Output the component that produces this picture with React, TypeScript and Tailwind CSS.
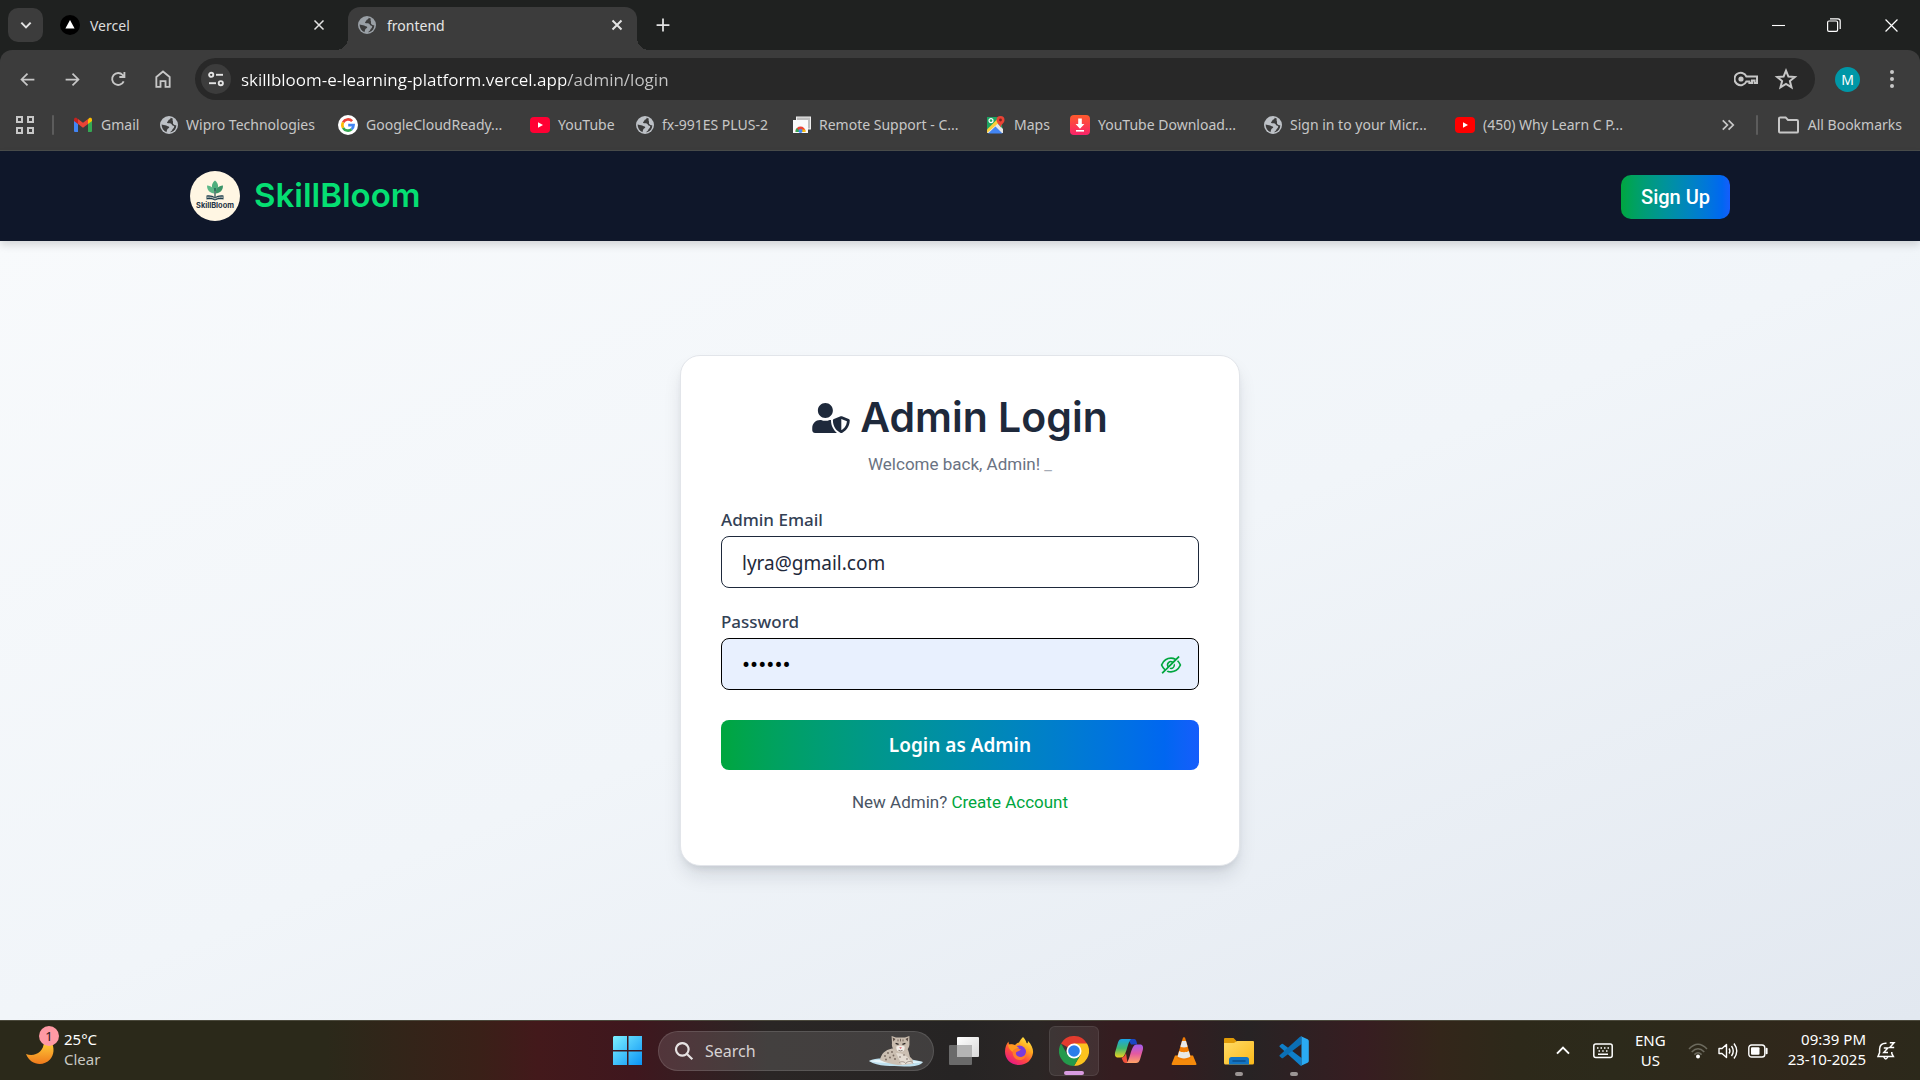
import { useState } from "react";
import type { ReactNode } from "react";
import { FaUserShield } from "react-icons/fa";
import { AiOutlineEye, AiOutlineEyeInvisible } from "react-icons/ai";

/* ---------- small icons ---------- */

function Globe({ fill, bg }: { fill: string; bg: string }) {
  return (
    <svg viewBox="0 0 18 18" className="size-[18px] shrink-0" aria-hidden="true">
      <circle cx="9" cy="9" r="9" fill={fill} />
      <path
        d="M1.6 8.6 C3 9.2 4.8 8.9 6.2 9.6 C7.4 10.3 8.4 10.4 9.2 11 C9.6 12 7.6 12.4 7.2 13.4 C7 14.4 6.4 15.4 6.6 16.2 C3.4 15 1.6 12 1.6 8.6 Z"
        fill={bg}
      />
      <path
        d="M10.6 1.8 C10.8 3 9.8 3.4 8.8 3.8 C8 4.2 8.6 5.4 7.4 5.8 C6.6 6.2 7 7.2 8 7.2 C9.6 7.2 11.4 7 11.8 8.6 C12 9.8 13.4 9.4 14.2 10.2 C14.6 11.4 13 12.4 12.4 13.6 C12 14.6 11.2 15.6 10 16.2 L11.6 16 C14.6 15 16.3 12.4 16.3 9.2 C15.4 9.4 14 9 13.2 8 C12.6 7 13.4 6 12.8 5 C12.2 4 12.8 3 13 2.8 Z"
        fill={bg}
      />
    </svg>
  );
}

function Line({ d, className, width = 2 }: { d: string; className: string; width?: number }) {
  return (
    <svg viewBox="0 0 24 24" className={className} fill="none" stroke="currentColor" strokeWidth={width} aria-hidden="true">
      <path d={d} />
    </svg>
  );
}

const GmailIcon = () => (
  <svg viewBox="0 0 20 16" className="h-4 w-5 shrink-0" aria-hidden="true">
    <path d="M1 3 V14 Q1 15 2 15 H5 V6.5 Z" fill="#4285f4" />
    <path d="M19 3 V14 Q19 15 18 15 H15 V6.5 Z" fill="#34a853" />
    <path d="M15 2.2 V7 L19 4 V2.4 C19 .8 17.2 .2 16 1.2 Z" fill="#fbbc04" />
    <path d="M5 2.2 V7 L1 4 V2.4 C1 .8 2.8 .2 4 1.2 Z" fill="#c5221f" />
    <path d="M5 2 L10 5.8 L15 2 V7 L10 10.8 L5 7 Z" fill="#ea4335" />
  </svg>
);

const GoogleIcon = () => (
  <svg viewBox="0 0 20 20" className="size-5 shrink-0" aria-hidden="true">
    <circle cx="10" cy="10" r="10" fill="#fff" />
    <g fill="none" strokeWidth="2.6">
      <path d="M14.1 6.2 A5.6 5.6 0 0 0 5.1 7.3" stroke="#ea4335" />
      <path d="M5.1 7.3 A5.6 5.6 0 0 0 5.1 12.8" stroke="#fbbc05" />
      <path d="M5.1 12.8 A5.6 5.6 0 0 0 13.6 14.3" stroke="#34a853" />
      <path d="M13.6 14.3 A5.6 5.6 0 0 0 15.6 10.1 H10.2" stroke="#4285f4" />
    </g>
  </svg>
);

const YouTubeIcon = ({ fill }: { fill: string }) => (
  <svg viewBox="0 0 20 16" className="h-4 w-5 shrink-0" aria-hidden="true">
    <rect width="20" height="16" rx="4" fill={fill} />
    <path d="M8 5.2 L13 8 L8 10.8 Z" fill="#fff" />
  </svg>
);

const RemoteIcon = () => (
  <svg viewBox="0 0 18 18" className="size-[18px] shrink-0" aria-hidden="true">
    <rect x="3.5" y="1" width="14" height="12" fill="#bdbdbd" stroke="#eee" />
    <rect x="0" y="4" width="15" height="13" fill="#fafafa" />
    <path d="M2.5 15.5 A5 5 0 0 1 12.5 15.5 H9.5 A2 2 0 0 0 5.5 15.5 Z" fill="#ea4335" />
    <path d="M2.5 16 A5 5 0 0 1 4 12 L6 14.5 V16 Z" fill="#34a853" />
    <path d="M9 16 V13.5 H12 A5 5 0 0 1 12.5 16 Z" fill="#fbbc05" />
    <circle cx="7.5" cy="15" r="2" fill="#4285f4" />
  </svg>
);

const MapsIcon = () => (
  <svg viewBox="0 0 20 20" className="size-5 shrink-0" aria-hidden="true">
    <path d="M1 2 H15 L17 18 H1 Z" fill="#1ea362" />
    <path d="M1 17 L11 8 L17 14 V18 H1 Z" fill="#e6e6e6" />
    <path d="M2 18.5 L9.5 11.5 L16.5 18.5 Z" fill="#4285f4" />
    <path d="M1 14.5 L11.5 4 L13 7.5 L1 18 Z" fill="#fbcf3a" />
    <circle cx="5" cy="5.6" r="2" fill="none" stroke="#fff" strokeWidth="1.2" />
    <path d="M14.5 1 A4 4 0 0 1 18.5 5 C18.5 8 15.6 8.6 14.5 12.5 C13.4 8.6 10.5 8 10.5 5 A4 4 0 0 1 14.5 1 Z" fill="#ea4335" />
    <circle cx="14.5" cy="5" r="1.4" fill="#7b231e" />
  </svg>
);

const DownloaderIcon = () => (
  <svg viewBox="0 0 20 20" className="size-5 shrink-0" aria-hidden="true">
    <defs>
      <linearGradient id="dl" x1="0" y1="0" x2="0" y2="1">
        <stop offset="0" stopColor="#ff5a2c" />
        <stop offset="1" stopColor="#f9236a" />
      </linearGradient>
    </defs>
    <rect width="20" height="20" rx="4" fill="url(#dl)" />
    <path d="M8.2 3.6 H11.8 V9 H14.4 L10 13.8 L5.6 9 H8.2 Z" fill="#fff" />
    <rect x="6" y="15" width="8" height="1.6" fill="#fff" />
  </svg>
);

/* ---------- browser chrome ---------- */

function TabStrip() {
  return (
    <div className="flex h-[50px] items-center bg-[#1f2120] text-[#e3e3e3]">
      <button aria-label="Search tabs" className="ml-2 flex h-[34px] w-[35px] items-center justify-center rounded-[10px] bg-[#3c3c3c]">
        <Line d="M5 8.5 L12 15.5 L19 8.5" className="size-4" width={3} />
      </button>
      <div className="flex h-full w-[290px] items-center pl-[17px]">
        <svg viewBox="0 0 20 20" className="size-5" aria-hidden="true">
          <circle cx="10" cy="10" r="10" fill="#000" />
          <path d="M10 5 L14.6 13.4 H5.4 Z" fill="#fff" />
        </svg>
        <span className="ml-[10px] flex-1 text-[14px] text-[#dcdcdc]">Vercel</span>
        <button aria-label="Close Vercel tab" className="p-2">
          <Line d="M3 3 L21 21 M21 3 L3 21" className="size-3" width={3} />
        </button>
      </div>
      <div className="relative ml-[15px] flex h-[43px] w-[289px] items-center self-end rounded-t-xl bg-[#3c3c3c] pr-[6px] pb-[7px] pl-[10px]">
        <span className="absolute bottom-0 -left-3 size-3 bg-[radial-gradient(circle_at_0_0,transparent_12px,#3c3c3c_12px)]" />
        <span className="absolute -right-3 bottom-0 size-3 bg-[radial-gradient(circle_at_100%_0,transparent_12px,#3c3c3c_12px)]" />
        <Globe fill="#9aa0a6" bg="#3c3c3c" />
        <span className="ml-[11px] flex-1 text-[14px] text-[#e6e6e6]">frontend</span>
        <button aria-label="Close frontend tab" className="p-2">
          <Line d="M3 3 L21 21 M21 3 L3 21" className="size-3" width={4} />
        </button>
      </div>
      <button aria-label="New tab" className="ml-[15px] p-1">
        <Line d="M12 1 V23 M1 12 H23" className="size-[14px]" width={3} />
      </button>
      <div className="ml-auto flex items-center text-white">
        <button aria-label="Minimise" className="flex h-12 w-[56px] items-center justify-center">
          <Line d="M0 12 H24" className="size-[13px]" width={2} />
        </button>
        <button aria-label="Restore" className="flex h-12 w-[56px] items-center justify-center">
          <svg viewBox="0 0 14 14" className="size-[14px]" fill="none" stroke="currentColor" strokeWidth="1.2" aria-hidden="true">
            <rect x="0.6" y="3" width="10" height="10.4" rx="1.4" />
            <path d="M3 .8 H11 Q13.2 .8 13.2 3 V11" />
          </svg>
        </button>
        <button aria-label="Close window" className="flex h-12 w-[58px] items-center justify-center">
          <Line d="M1 1 L23 23 M23 1 L1 23" className="size-[13px]" width={2.2} />
        </button>
      </div>
    </div>
  );
}

function NavButton({ label, children }: { label: string; children: ReactNode }) {
  return (
    <button aria-label={label} className="flex size-[45px] items-center justify-center text-[#c7c7c7]">
      {children}
    </button>
  );
}

function Toolbar() {
  return (
    <div className="flex h-[50px] items-center pr-1.5 pl-[5px] pt-2">
      <NavButton label="Back">
        <Line d="M23 12 H3 M12 2.5 L2.5 12 L12 21.5" className="size-[15px]" width={2.8} />
      </NavButton>
      <NavButton label="Forward">
        <Line d="M1 12 H21 M12 2.5 L21.5 12 L12 21.5" className="size-[15px]" width={2.8} />
      </NavButton>
      <NavButton label="Reload">
        <Line d="M20.5 15.5 A9 9 0 1 1 19 6 L21 8.6 M21.6 1.5 V9 H14" className="size-4" width={2.8} />
      </NavButton>
      <NavButton label="Home">
        <Line d="M4 9.5 L12 3 L20 9.5 V21.5 H15 V14.5 H9 V21.5 H4 Z" className="size-5" width={2.2} />
      </NavButton>
      <div className="ml-[10px] flex h-[42px] flex-1 items-center rounded-full bg-[#282828] pl-1.5">
        <button aria-label="View site information" className="flex size-[30px] items-center justify-center rounded-full bg-[#3c3c3c] text-[#e3e3e3]">
          <svg viewBox="0 0 16 16" className="size-4" fill="none" stroke="currentColor" strokeWidth="1.9" aria-hidden="true">
            <circle cx="3.2" cy="3.8" r="2.1" />
            <path d="M8 3.8 H15" />
            <circle cx="12.8" cy="12.2" r="2.1" />
            <path d="M1 12.2 H8" />
          </svg>
        </button>
        <input
          aria-label="Address"
          defaultValue="skillbloom-e-learning-platform.vercel.app/admin/login"
          className="ml-[10px] h-8 flex-1 bg-[linear-gradient(90deg,#ffffff_325px,#c7c7c7_325px)] bg-clip-text font-['Open_Sans',sans-serif] text-[17px] text-transparent outline-none"
        />
        <button aria-label="Manage passwords" className="p-2 text-[#c7c7c7]">
          <svg viewBox="0 0 24 16" className="h-4 w-6" fill="none" stroke="currentColor" strokeWidth="2" aria-hidden="true">
            <path d="M12.4 5.5 H23 V12 H20.6 V9.6 H18 V12 H15.4 V10.4 H12.4 A6.2 6.2 0 1 1 12.4 5.5 Z" />
            <circle cx="7" cy="8" r="2.6" fill="currentColor" stroke="none" />
          </svg>
        </button>
        <button aria-label="Bookmark this tab" className="mr-[9px] p-2 text-[#c7c7c7]">
          <svg viewBox="0 0 24 24" className="size-6" fill="none" stroke="currentColor" strokeWidth="2" aria-hidden="true">
            <path d="M12 3.6 L14.4 9.6 L20.8 10 L15.9 14 L17.5 20.4 L12 16.9 L6.5 20.4 L8.1 14 L3.2 10 L9.6 9.6 Z" />
          </svg>
        </button>
      </div>
      <button aria-label="Profile" className="ml-5 flex size-[25px] items-center justify-center rounded-full bg-[#0097a7] text-[14px] text-white">
        M
      </button>
      <button aria-label="Browser menu" className="ml-[10px] flex size-11 items-center justify-center text-[#c7c7c7]">
        <svg viewBox="0 0 4 20" className="h-5 w-1" fill="currentColor" aria-hidden="true">
          <circle cx="2" cy="3" r="2" />
          <circle cx="2" cy="10" r="2" />
          <circle cx="2" cy="17" r="2" />
        </svg>
      </button>
    </div>
  );
}

const grey = <Globe fill="#bdc1c6" bg="#3c3c3c" />;

function Bookmark({ icon, text, width }: { icon: ReactNode; text: string; width: string }) {
  return (
    <a href="#" className={`flex shrink-0 items-center gap-2 whitespace-nowrap ${width}`}>
      {icon}
      {text}
    </a>
  );
}

function BookmarksBar() {
  return (
    <div className="flex h-[51px] items-center border-b border-[#4a4d4b] pr-[18px] pb-px pl-4 text-[14px] text-[#c7c7c7]">
      <button aria-label="Apps">
        <svg viewBox="0 0 18 18" className="size-[18px]" fill="none" stroke="currentColor" strokeWidth="2" aria-hidden="true">
          <rect x="1" y="1" width="5" height="5" />
          <rect x="12" y="1" width="5" height="5" />
          <rect x="1" y="12" width="5" height="5" />
          <rect x="12" y="12" width="5" height="5" />
        </svg>
      </button>
      <span className="mr-[19px] ml-[18px] h-5 w-0.5 rounded bg-[#5c5c5c]" />
      <nav aria-label="Bookmarks" className="flex">
        <Bookmark icon={<GmailIcon />} text="Gmail" width="w-[87px]" />
        <Bookmark icon={grey} text="Wipro Technologies" width="w-[178px]" />
        <Bookmark icon={<GoogleIcon />} text="GoogleCloudReady..." width="w-[192px]" />
        <Bookmark icon={<YouTubeIcon fill="#ff0033" />} text="YouTube" width="w-[106px]" />
        <Bookmark icon={grey} text="fx-991ES PLUS-2" width="w-[157px]" />
        <Bookmark icon={<RemoteIcon />} text="Remote Support - C..." width="w-[193px]" />
        <Bookmark icon={<MapsIcon />} text="Maps" width="w-[84px]" />
        <Bookmark icon={<DownloaderIcon />} text="YouTube Download..." width="w-[194px]" />
        <Bookmark icon={grey} text="Sign in to your Micr..." width="w-[191px]" />
        <Bookmark icon={<YouTubeIcon fill="#ff0000" />} text="(450) Why Learn C P..." width="w-[180px]" />
      </nav>
      <button aria-label="More bookmarks" className="ml-auto">
        <Line d="M3 4 L11 12 L3 20 M13 4 L21 12 L13 20" className="size-[14px]" width={3} />
      </button>
      <span className="mr-5 ml-[21px] h-5 w-0.5 rounded bg-[#5c5c5c]" />
      <button className="flex items-center gap-[9px]">
        <svg viewBox="0 0 21 18" className="h-[18px] w-[21px]" fill="none" stroke="currentColor" strokeWidth="2" aria-hidden="true">
          <path d="M1 2.6 Q1 1.4 2.2 1.4 H7.6 L10 4 H18.8 Q20 4 20 5.2 V15.4 Q20 16.6 18.8 16.6 H2.2 Q1 16.6 1 15.4 Z" />
        </svg>
        All Bookmarks
      </button>
    </div>
  );
}

/* ---------- site ---------- */

function SiteHeader() {
  return (
    <header className="relative z-10 h-[90px] bg-[#0f172a] px-6 shadow-[0_4px_8px_rgba(0,0,0,0.14)]">
      <div className="mx-auto flex h-full max-w-[1540px] items-center justify-between">
        <a href="#" className="flex items-center gap-[14px]">
          <svg viewBox="0 0 50 50" className="size-[50px]" role="img" aria-label="SkillBloom logo">
            <circle cx="25" cy="25" r="25" fill="#fff6e3" />
            <path d="M25 9.5 C29.2 13 29 17.5 25 20.6 C21 17.5 20.8 13 25 9.5 Z" fill="#4fae7c" />
            <path d="M17 14.5 C22 15 24.4 17.6 24.5 22.4 C19.8 22 17 19.4 17 14.5 Z" fill="#5db888" />
            <path d="M33 14.5 C28 15 25.6 17.6 25.5 22.4 C30.2 22 33 19.4 33 14.5 Z" fill="#3b9468" />
            <path d="M25 17 V26" stroke="#1d4b4a" strokeWidth="1.2" />
            <path d="M16.5 24.5 C20 24 23 24.6 25 26.4 C27 24.6 30 24 33.5 24.5 V28.4 C30 28 27 28.2 25 29.6 C23 28.2 20 28 16.5 28.4 Z" fill="#1f3f50" />
            <path d="M17 26.2 C20.5 26 23 26.4 25 28 C27 26.4 29.5 26 33 26.2" fill="none" stroke="#fff6e3" strokeWidth=".8" />
            <text x="25" y="37.4" textAnchor="middle" fontFamily="Inter, sans-serif" fontWeight="700" fontSize="7.4" fill="#1e3345">
              SkillBloom
            </text>
          </svg>
          <span className="pb-0.5 font-[Inter,sans-serif] text-[33px] leading-10 font-semibold text-[#05df72]">SkillBloom</span>
        </a>
        <a
          href="#"
          className="mt-0.5 rounded-[10px] bg-linear-to-r from-[#00a63e] to-[#155dfc] px-5 py-2 font-[Roboto,sans-serif] text-[20px] leading-7 font-medium text-white"
        >
          Sign Up
        </a>
      </div>
    </header>
  );
}

function LoginCard() {
  const [visible, setVisible] = useState(false);
  return (
    <form
      onSubmit={(e) => e.preventDefault()}
      className="w-full max-w-[560px] rounded-[20px] border border-[#e2e5ea] bg-white px-10 pt-10 pb-[50px] shadow-[0_12px_20px_-3px_rgba(15,23,42,0.12),0_5px_8px_-4px_rgba(15,23,42,0.12)]"
    >
      <h1 className="flex h-[45px] items-center justify-center gap-[10px] font-[Inter,sans-serif] text-[41px] font-semibold text-[#1e293b]">
        <FaUserShield className="h-[30px] w-[38px]" aria-hidden="true" />
        Admin Login
      </h1>
      <p className="mt-[10px] text-center font-[Roboto,sans-serif] text-[17px] leading-[26px] text-[#6a7282]">
        Welcome back, Admin! <span className="text-[#a5abb6]">_</span>
      </p>

      <label htmlFor="email" className="mt-[31px] block text-[17px] leading-[24px] font-medium text-[#334155]">
        Admin Email
      </label>
      <input
        id="email"
        type="email"
        defaultValue="lyra@gmail.com"
        className="mt-1 h-[52px] w-full rounded-lg border border-[#1e293b] px-5 pt-0.5 text-[19px] text-[#1e293b] outline-none"
      />

      <label htmlFor="password" className="mt-[22px] block text-[17px] leading-[24px] font-medium text-[#334155]">
        Password
      </label>
      <div className="relative mt-1">
        <input
          id="password"
          type={visible ? "text" : "password"}
          defaultValue="bloom1"
          className="h-[52px] w-full rounded-lg border border-black bg-[#e8f0fe] px-5 pt-0.5 font-[Roboto,sans-serif] text-[24px] text-black outline-none"
        />
        <button
          type="button"
          aria-label={visible ? "Hide password" : "Show password"}
          onClick={() => setVisible(!visible)}
          className="absolute inset-y-0 right-4 pt-0.5 text-[24px] text-[#00a63e]"
        >
          {visible ? <AiOutlineEye /> : <AiOutlineEyeInvisible />}
        </button>
      </div>

      <button
        type="submit"
        className="mt-[30px] h-[50px] w-full rounded-lg bg-linear-to-r from-[#00a63e] to-[#155dfc] pt-0.5 text-[19px] font-semibold text-white"
      >
        Login as Admin
      </button>

      <p className="mt-5 text-center font-[Roboto,sans-serif] text-[17px] leading-[25px] text-[#4a5565]">
        New Admin?{" "}
        <a href="#" className="text-[#00a63e]">
          Create Account
        </a>
      </p>
    </form>
  );
}

/* ---------- taskbar ---------- */

const WindowsIcon = () => (
  <svg viewBox="0 0 30 30" className="size-[30px]" aria-hidden="true">
    <defs>
      <linearGradient id="win" x1="0" y1="0" x2="1" y2="1">
        <stop offset="0" stopColor="#7df0ff" />
        <stop offset="1" stopColor="#0a93f5" />
      </linearGradient>
    </defs>
    <path d="M1 0 H14 V14 H0 V1 Z M15.5 0 H29 V14 H15.5 Z M0 15.5 H14 V29 H0 Z M15.5 15.5 H29 V29 H15.5 Z" fill="url(#win)" />
  </svg>
);

const LeopardIcon = () => (
  <svg viewBox="0 0 56 32" className="h-8 w-14" aria-hidden="true">
    <path d="M1 26 C8 22 20 24 30 24 C40 23 50 26 55 27 C52 31 44 32 36 31.5 C24 31 10 32 1 26 Z" fill="#bfe0ee" />
    <path d="M1 26 C10 24 24 26 34 26 C42 26 50 26 55 27 C46 29 12 29 1 26 Z" fill="#e8f6fb" />
    <path d="M12 25 C13 19 17 15 24 13.5 L39 13 C41 16 41 19 42 22 C45 24 46 27 44 29 L30 30 C24 29 18 28 12 25 Z" fill="#cbbfb2" />
    <path d="M28 18 C34 18 41 21 43 28 L34 30 Z" fill="#e4dcd2" />
    <path d="M23.6 1 L28 2.6 H37 L41.4 1 L41.4 8 C42 13 38 17.5 32.5 17.5 C27 17.5 23 13 24 8 Z" fill="#c9bcae" />
    <path d="M24.6 2.4 L27.5 4 L25.4 6.6 Z M40.4 2.4 L37.5 4 L39.7 6.6 Z" fill="#5e5048" />
    <path d="M28.4 11.6 C30 10.4 35 10.4 36.6 11.6 C37 15.4 35 17 32.5 17 C30 17 28 15.4 28.4 11.6 Z" fill="#f3eee8" />
    <path d="M31.2 12.2 H33.9 L32.6 14 Z" fill="#d9606a" />
    <path d="M27.6 8.4 L30.6 9.4 M37.4 8.4 L34.4 9.4" stroke="#2f2926" strokeWidth="1.5" />
    <path d="M30 4.4 V6.4 M32.5 3.8 V6.4 M35 4.4 V6.4 M30.5 15.4 Q32.5 16.6 34.5 15.4" stroke="#6d5f56" strokeWidth=".9" fill="none" />
    <g fill="#75675d">
      <circle cx="17" cy="21" r=".9" />
      <circle cx="20" cy="18" r=".9" />
      <circle cx="22" cy="22.5" r=".9" />
      <circle cx="24" cy="17" r=".9" />
      <circle cx="25.5" cy="20.5" r=".9" />
      <circle cx="27" cy="24" r=".9" />
      <circle cx="18" cy="24.5" r=".9" />
      <circle cx="32" cy="22" r=".8" />
      <circle cx="36" cy="20" r=".8" />
      <circle cx="39" cy="24" r=".8" />
    </g>
    <path d="M31 28 C33 26 37 26.5 38 29 M38 28 C40 26 44 26 45 28.5" stroke="#8b7f76" strokeWidth=".8" fill="#efeae3" />
  </svg>
);

const TaskViewIcon = () => (
  <svg viewBox="0 0 30 28" className="h-7 w-[30px]" aria-hidden="true">
    <defs>
      <linearGradient id="tv" x1="0" y1="0" x2="1" y2="1">
        <stop offset="0" stopColor="#fff" />
        <stop offset="1" stopColor="#d8d8d8" />
      </linearGradient>
    </defs>
    <rect x="8" y="0" width="22" height="20" rx="1" fill="url(#tv)" />
    <rect x="0" y="8" width="23" height="20" rx="1" fill="#6a6a6a" />
    <rect x="8" y="8" width="15" height="12" fill="#b4b4b4" />
  </svg>
);

const FirefoxIcon = () => (
  <svg viewBox="0 0 30 30" className="size-[30px]" aria-hidden="true">
    <defs>
      <linearGradient id="ff" x1=".85" y1="0" x2=".2" y2="1">
        <stop offset="0" stopColor="#fff24a" />
        <stop offset=".35" stopColor="#ffa51e" />
        <stop offset=".65" stopColor="#ff4a3f" />
        <stop offset="1" stopColor="#e3108f" />
      </linearGradient>
    </defs>
    <path d="M19 1 C21 3 22 5 22.6 7 C24 8 24 6 23.8 4.8 C28 9 29.5 14 29 17 C28 24 22.5 29 15 29 C7 29 1 23.5 1 15.5 C1 11 2.5 8 4.5 5.5 C4.5 7 5 8 5.6 8.6 C7 8 9 8 11 9 C12 7.5 13.5 6.6 15 6.4 C16 4.5 17.5 2.5 19 1 Z" fill="url(#ff)" />
    <circle cx="15.5" cy="16" r="6.5" fill="#7a3bdc" />
    <path d="M9 13 C11 11.5 14 12.5 17 13.5 C15.5 15.5 13 15 12 16.5 C11.5 18.5 13 20.5 16 21 C20 21 22 18.5 22 15.5 C23.5 19 21 24 15.5 24 C10.5 24 7.5 19 9 13 Z" fill="#ff7a2a" />
    <path d="M4 9 C8 7.5 12 9 15.5 12.5 C11 12 9 13.5 8.5 16 C6 14 4.5 12 4 9 Z" fill="#ff9a1f" />
  </svg>
);

const ChromeIcon = () => (
  <svg viewBox="0 0 30 30" className="size-[30px]" aria-hidden="true">
    <path d="M15 15 L2 7.5 A15 15 0 0 1 28 7.5 Z" fill="#e33b2e" />
    <path d="M15 15 V7.5 H28 A15 15 0 0 1 15 30 L21.5 18.7 Z" fill="#fcc31e" />
    <path d="M15 15 L21.5 18.7 L15 30 A15 15 0 0 1 2 7.5 L8.5 18.7 Z" fill="#249a4b" />
    <circle cx="15" cy="15" r="7.5" fill="#fff" />
    <circle cx="15" cy="15" r="5.8" fill="#2b7de9" />
  </svg>
);

const CopilotIcon = () => (
  <svg viewBox="0 0 30 28" className="h-7 w-[30px]" aria-hidden="true">
    <defs>
      <linearGradient id="c1" x1="0" y1="0" x2="0" y2="1">
        <stop offset="0" stopColor="#1aa5e8" />
        <stop offset=".5" stopColor="#3fb86f" />
        <stop offset="1" stopColor="#f0d01e" />
      </linearGradient>
      <linearGradient id="c2" x1="0" y1="0" x2="0" y2="1">
        <stop offset="0" stopColor="#a25cf0" />
        <stop offset=".5" stopColor="#e45aa0" />
        <stop offset="1" stopColor="#ffa466" />
      </linearGradient>
    </defs>
    <path d="M14 2 H20 C22 2 22.6 4 23.2 7.6 H17 Z" fill="#1b46c4" />
    <path d="M8 2 H17 C14 5 13.5 12 11 17 C10 19.5 9 20.5 6.5 20.5 H4 C1 20.5 .5 18 1.2 15 L4 5.5 C4.8 3 6 2 8 2 Z" fill="url(#c1)" />
    <path d="M7.5 20.5 C10 20.5 11 18.5 12 16 L13.5 26 H11.5 C9.5 26 8.5 23 7.5 20.5 Z" fill="#f0503a" />
    <path d="M22 26 H12.5 C15.5 23 16 16 18.5 11 C19.5 8.5 21 7.5 23 7.5 H26 C29 7.5 29.5 10 28.8 13 L26 22.5 C25.2 25 24 26 22 26 Z" fill="url(#c2)" />
  </svg>
);

const VlcIcon = () => (
  <svg viewBox="0 0 26 28" className="h-7 w-[26px]" aria-hidden="true">
    <path d="M4 18.5 H22 L25.5 27 Q25.6 28 24.5 28 H1.5 Q.4 28 .6 27 Z" fill="#f58a0b" />
    <path d="M12 .5 Q13 -.2 14 .5 L20 20.5 C18 24 8 24 6 20.5 Z" fill="#f07c05" />
    <path d="M11 4 L15 4 L16.6 9.6 C15 10.8 11 10.8 9.4 9.6 Z" fill="#e8e8e8" />
    <path d="M8.2 14 C10.5 15.6 15.5 15.6 17.8 14 L19.4 19.6 C17 22 9 22 6.6 19.6 Z" fill="#e8e8e8" />
  </svg>
);

const ExplorerIcon = () => (
  <svg viewBox="0 0 30 28" className="h-7 w-[30px]" aria-hidden="true">
    <defs>
      <linearGradient id="fe" x1="0" y1="0" x2="1" y2="1">
        <stop offset="0" stopColor="#ffdb66" />
        <stop offset="1" stopColor="#fbb91a" />
      </linearGradient>
    </defs>
    <path d="M0 2 Q0 1 1 1 H9.5 L12.5 4 V8 H0 Z" fill="#e09a07" />
    <path d="M0 6 H10 L13 4 H29 Q30 4 30 5 V26 Q30 27.5 28.5 27.5 H1.5 Q0 27.5 0 26 Z" fill="url(#fe)" />
    <path d="M5 27.5 V22.5 Q5 20 7.5 20 H22.5 Q25 20 25 22.5 V27.5 Z" fill="#1275c4" />
    <path d="M9 24 H21" stroke="#0b4f8c" strokeWidth="1.5" strokeLinecap="round" />
  </svg>
);

const VsCodeIcon = () => (
  <svg viewBox="0 0 30 30" className="size-[30px]" aria-hidden="true">
    <path d="M.6 9.8 L2.6 8 Q3.3 7.5 4 8 L22.5 22 V29.8 Q21.6 29.8 21 29.2 L.6 10.8 Q.2 10.3 .6 9.8 Z" fill="#0f7fc9" />
    <path d="M.6 20.2 L2.6 22 Q3.3 22.5 4 22 L22.5 8 V.2 Q21.6 .2 21 .8 L.6 19.2 Q.2 19.7 .6 20.2 Z" fill="#0b6fb5" />
    <path d="M22 .2 L28.6 3.3 Q29.8 3.9 29.8 5 V25 Q29.8 26.1 28.6 26.7 L22 29.8 Q22.8 29 22.5 27 V3 Q22.8 1 22 .2 Z" fill="#2aaaf2" />
  </svg>
);

function TaskButton({ label, children, state = "idle" }: { label: string; children: ReactNode; state?: "idle" | "open" | "active" }) {
  return (
    <button
      aria-label={label}
      className={
        state === "active"
          ? "relative flex size-[50px] items-center justify-center rounded-md border border-white/8 bg-white/8"
          : "relative flex size-[50px] items-center justify-center"
      }
    >
      {children}
      {state === "active" && <span className="absolute bottom-0 h-1 w-5 rounded-full bg-[#d99be0]" />}
      {state === "open" && <span className="absolute bottom-0 h-1 w-2 rounded-full bg-[#9b9594]" />}
    </button>
  );
}

function Taskbar() {
  return (
    <footer className="grid h-[60px] grid-cols-[1fr_auto_1fr] items-center border-t border-[#4b493c] bg-[linear-gradient(90deg,#2b291a_0%,#2b291a_17%,#3a2018_25%,#43191b_28%,#3f171e_33%,#2a2625_40%,#262424_50%,#2b2625_54%,#351d20_58%,#331d20_61%,#272324_65%,#371d21_71%,#33261a_75%,#2d291a_79%,#2c2a1b_84%,#30271b_94%,#2c291b_100%)] text-[15px] leading-5 text-white">
      <button className="relative flex items-center pl-6 text-left" aria-label="Weather, 25 degrees, clear">
        <svg viewBox="0 0 32 40" className="h-10 w-8" aria-hidden="true">
          <defs>
            <linearGradient id="moon" x1="0" y1="0" x2="0" y2="1">
              <stop offset="0" stopColor="#ffd23a" />
              <stop offset="1" stopColor="#f07a1c" />
            </linearGradient>
          </defs>
          <path d="M27 10 C31 17 30 24 26 28.5 C19 36 6 34 2 23 C10 26 20 22 20 10 Z" fill="url(#moon)" />
        </svg>
        <span className="absolute top-[-3px] left-[39px] flex size-5 items-center justify-center rounded-full bg-[#ff99a4] text-[13px] text-[#2a1518]">1</span>
        <span className="ml-2 flex flex-col pb-1">
          <span>25°C</span>
          <span className="text-[#c9c8c2]">Clear</span>
        </span>
      </button>

      <div className="flex items-center gap-[5px] pl-0.5">
        <TaskButton label="Start">
          <WindowsIcon />
        </TaskButton>
        <label className="flex h-10 w-[276px] items-center rounded-full border border-white/12 bg-white/12 pr-[9px] pl-[15px]">
          <Line d="M10 2.5 A7.5 7.5 0 1 1 9.9 2.5 Z M15.5 15.5 L22 22" className="size-5 text-[#e6e2e2]" width={2.6} />
          <input aria-label="Search" placeholder="Search" className="ml-[11px] w-0 flex-1 bg-transparent text-[16px] outline-none placeholder:text-[#d6d2d2]" />
          <LeopardIcon />
        </label>
        <TaskButton label="Task view">
          <TaskViewIcon />
        </TaskButton>
        <TaskButton label="Firefox">
          <FirefoxIcon />
        </TaskButton>
        <TaskButton label="Google Chrome" state="active">
          <ChromeIcon />
        </TaskButton>
        <TaskButton label="Copilot">
          <CopilotIcon />
        </TaskButton>
        <TaskButton label="VLC media player">
          <VlcIcon />
        </TaskButton>
        <TaskButton label="File Explorer" state="open">
          <ExplorerIcon />
        </TaskButton>
        <TaskButton label="Visual Studio Code" state="open">
          <VsCodeIcon />
        </TaskButton>
      </div>

      <div className="flex items-center justify-end pr-6">
        <button aria-label="Show hidden icons">
          <Line d="M3 16 L12 7 L21 16" className="size-4" width={3} />
        </button>
        <button aria-label="Touch keyboard" className="ml-[22px]">
          <svg viewBox="0 0 20 16" className="h-4 w-5" fill="none" stroke="currentColor" strokeWidth="1.5" aria-hidden="true">
            <rect x=".8" y="1" width="18.4" height="13.6" rx="2" />
            <path d="M4 5 H5.5 M7.5 5 H9 M11 5 H12.5 M14.5 5 H16 M5.5 8 H7 M9.2 8 H10.7 M13 8 H14.5 M5 11.3 H15" />
          </svg>
        </button>
        <button aria-label="Input language" className="ml-[22px] flex flex-col items-center pb-0.5">
          <span>ENG</span>
          <span>US</span>
        </button>
        <button aria-label="Network, volume and battery" className="ml-[22px] flex items-center gap-[10px]">
          <svg viewBox="0 0 20 16" className="h-4 w-5" fill="none" stroke="#6c6a5e" strokeWidth="1.5" aria-hidden="true">
            <path d="M1 6 Q10 -3.5 19 6 M3.7 9 Q10 2.5 16.3 9 M6.4 11.6 Q10 8 13.6 11.6" />
            <circle cx="10" cy="13.5" r="2" fill="#fff" stroke="none" />
          </svg>
          <svg viewBox="0 0 20 18" className="h-[18px] w-5" fill="none" stroke="currentColor" strokeWidth="1.4" aria-hidden="true">
            <path d="M1 6.5 H4 L8.5 2.5 V15.5 L4 11.5 H1 Z" strokeLinejoin="round" />
            <path d="M11 6.5 Q12.8 9 11 11.5 M13.5 4 Q17 9 13.5 14 M16 1.5 Q21.5 9 16 16.5" />
          </svg>
          <svg viewBox="0 0 20 14" className="h-[14px] w-5" fill="none" stroke="currentColor" strokeWidth="1.4" aria-hidden="true">
            <rect x=".8" y="1" width="16" height="12" rx="2.8" />
            <rect x="3" y="3.2" width="8.5" height="7.6" rx="1" fill="currentColor" stroke="none" />
            <path d="M18.6 4.8 V9.2" strokeWidth="2" strokeLinecap="round" />
          </svg>
        </button>
        <button aria-label="Clock" className="ml-5 flex flex-col items-end pb-1">
          <span>09:39 PM</span>
          <span>23-10-2025</span>
        </button>
        <button aria-label="Notifications" className="ml-[10px]">
          <svg viewBox="0 0 20 20" className="size-5" fill="none" stroke="currentColor" strokeWidth="1.5" aria-hidden="true">
            <path d="M10.5 2.2 C6 1.8 3.6 4.5 3.6 8 V11.5 L2 15.6 H17.4 L15.8 12.5 V11" />
            <path d="M7.8 16 Q9.7 19.8 11.7 16" />
            <path d="M7.8 7 H11.8 L7.8 11.6 H12 M13.8 1.8 H18 L13.8 6.6 H18.2" />
          </svg>
        </button>
      </div>
    </footer>
  );
}

export default function App() {
  return (
    <div className="flex min-h-screen flex-col font-['Noto_Sans',sans-serif]">
      <div className="bg-[#1f2120]">
        <TabStrip />
        <div className="rounded-t-xl bg-[#3c3c3c]">
          <Toolbar />
          <BookmarksBar />
        </div>
      </div>
      <SiteHeader />
      <main className="flex flex-1 items-center justify-center bg-linear-to-br from-[#f8fafc] via-[#f1f5f9] to-[#e2e8f0] pb-[41px]">
        <LoginCard />
      </main>
      <Taskbar />
    </div>
  );
}
